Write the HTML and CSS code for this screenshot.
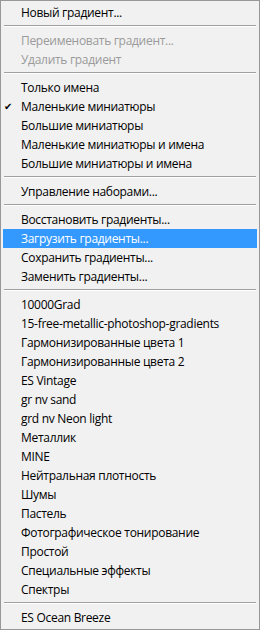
FILE: index.html
```html
<!DOCTYPE html>
<html lang="ru">
<head>
    <meta charset="UTF-8">
    <title>Градиенты</title>
    <link rel="stylesheet" href="styles.css">
</head>
<body>
    <div class="menu">
        <ul class="menu-list">
            <li class="menu-item">Новый градиент...</li>
            <li class="menu-sep"></li>
            <li class="menu-item disabled">Переименовать градиент...</li>
            <li class="menu-item disabled">Удалить градиент</li>
            <li class="menu-sep"></li>
            <li class="menu-item">Только имена</li>
            <li class="menu-item checked">Маленькие миниатюры</li>
            <li class="menu-item">Большие миниатюры</li>
            <li class="menu-item">Маленькие миниатюры и имена</li>
            <li class="menu-item">Большие миниатюры и имена</li>
            <li class="menu-sep"></li>
            <li class="menu-item">Управление наборами...</li>
            <li class="menu-sep"></li>
            <li class="menu-item">Восстановить градиенты...</li>
            <li class="menu-item active">Загрузить градиенты...</li>
            <li class="menu-item">Сохранить градиенты...</li>
            <li class="menu-item">Заменить градиенты...</li>
            <li class="menu-sep"></li>
            <li class="menu-item">10000Grad</li>
            <li class="menu-item">15-free-metallic-photoshop-gradients</li>
            <li class="menu-item">Гармонизированные цвета 1</li>
            <li class="menu-item">Гармонизированные цвета 2</li>
            <li class="menu-item">ES Vintage</li>
            <li class="menu-item">gr nv sand</li>
            <li class="menu-item">grd nv Neon light</li>
            <li class="menu-item">Металлик</li>
            <li class="menu-item">MINE</li>
            <li class="menu-item">Нейтральная плотность</li>
            <li class="menu-item">Шумы</li>
            <li class="menu-item">Пастель</li>
            <li class="menu-item">Фотографическое тонирование</li>
            <li class="menu-item">Простой</li>
            <li class="menu-item">Специальные эффекты</li>
            <li class="menu-item">Спектры</li>
            <li class="menu-sep"></li>
            <li class="menu-item">ES Ocean Breeze</li>
        </ul>
    </div>
</body>
</html>
```

FILE: styles.css
```css
* {
    margin: 0;
    padding: 0;
    box-sizing: border-box;
}

body {
    font-family: 'Open Sans', 'Noto Sans', sans-serif;
    font-size: 12px;
    letter-spacing: -0.3px;
    color: #000;
    background-color: #f1f1f1;
}

.menu {
    width: 260px;
    height: 630px;
    background-color: #f1f1f1;
    border: 1px solid #979797;
    padding: 2px 0;
}

.menu-list {
    list-style: none;
}

.menu-item {
    position: relative;
    height: 19px;
    line-height: 19px;
    margin: 0 2px;
    padding-left: 18px;
    white-space: nowrap;
}

.menu-item.disabled {
    color: #9a9a9a;
}

.menu-item.active {
    background-color: #3399ff;
    color: #fff;
}

.menu-item.checked::before {
    content: '✔';
    position: absolute;
    left: 1px;
    top: 0;
    font-family: 'DejaVu Sans', sans-serif;
    font-size: 10px;
}

.menu-sep {
    margin: 3px 3px 4px;
    border-top: 1px solid #a0a0a0;
    border-bottom: 1px solid #fff;
}
```
